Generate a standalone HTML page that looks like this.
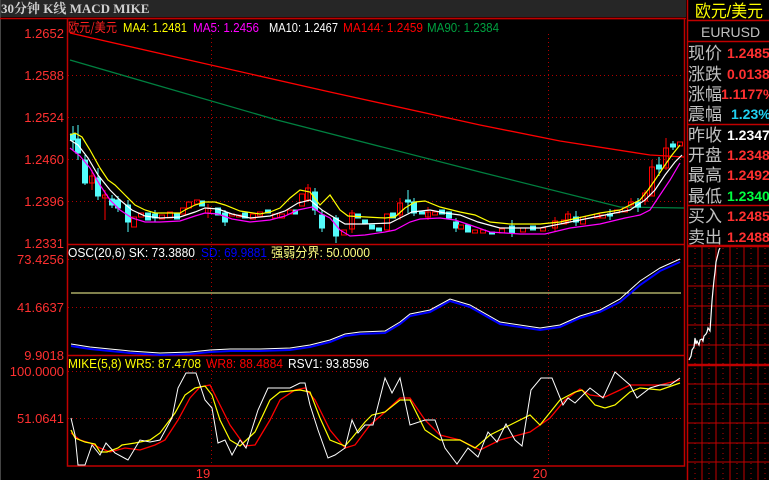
<!DOCTYPE html>
<html><head><meta charset="utf-8"><style>
html,body{margin:0;padding:0;background:#000;width:769px;height:480px;overflow:hidden}
svg{display:block}
text{font-family:"Liberation Sans","Noto Sans CJK SC",sans-serif}
</style></head><body>
<svg width="769" height="480" viewBox="0 0 769 480" xmlns="http://www.w3.org/2000/svg">
<rect width="769" height="480" fill="#000"/>
<rect x="0" y="0" width="686" height="17" fill="#262626"/>
<text x="1" y="13" font-size="13" font-weight="bold" fill="#d0d0d0" style="font-family:'Liberation Serif','Noto Serif CJK SC',serif">30分钟 K线 MACD MIKE</text>
<line x1="0" y1="0" x2="0" y2="480" stroke="#444" stroke-width="2"/>
<g stroke="#c00000" stroke-width="1.5" fill="none">
<line x1="0" y1="18.5" x2="686" y2="18.5"/>
<rect x="67.5" y="18.5" width="617" height="447.5"/>
<line x1="67" y1="244.5" x2="685" y2="244.5"/>
<line x1="67" y1="355.5" x2="685" y2="355.5"/>
</g>
<g stroke="#b00000" stroke-width="1" stroke-dasharray="1,3">
<line x1="68" y1="75.5" x2="684" y2="75.5"/>
<line x1="68" y1="117.5" x2="684" y2="117.5"/>
<line x1="68" y1="159.5" x2="684" y2="159.5"/>
<line x1="68" y1="201.5" x2="684" y2="201.5"/>
<line x1="68" y1="259.5" x2="684" y2="259.5"/>
<line x1="68" y1="307.5" x2="684" y2="307.5"/>
<line x1="68" y1="371.5" x2="684" y2="371.5"/>
<line x1="68" y1="418.5" x2="684" y2="418.5"/>
<line x1="211.5" y1="34" x2="211.5" y2="466"/>
<line x1="548.5" y1="34" x2="548.5" y2="466"/>
</g>
<g fill="#ff3030" font-size="13" text-anchor="end">
<text x="64" y="38">1.2652</text>
<text x="64" y="80">1.2588</text>
<text x="64" y="122">1.2524</text>
<text x="64" y="164">1.2460</text>
<text x="64" y="206">1.2396</text>
<text x="64" y="248">1.2331</text>
<text x="64" y="264">73.4256</text>
<text x="64" y="312">41.6637</text>
<text x="64" y="360">9.9018</text>
<text x="64" y="376">100.0000</text>
<text x="64" y="423">51.0641</text>
<text x="203" y="478" text-anchor="middle">19</text>
<text x="540" y="478" text-anchor="middle">20</text>
</g>
<g font-size="13">
<text x="68" y="32" fill="#ff2020" style="font-family:'Noto Sans CJK SC',sans-serif" textLength="49" lengthAdjust="spacingAndGlyphs">欧元/美元</text>
<text x="123" y="32" fill="#ffff00" textLength="64" lengthAdjust="spacingAndGlyphs">MA4: 1.2481</text>
<text x="193" y="32" fill="#ff00ff" textLength="66" lengthAdjust="spacingAndGlyphs">MA5: 1.2456</text>
<text x="269" y="32" fill="#ffffff" textLength="69" lengthAdjust="spacingAndGlyphs">MA10: 1.2467</text>
<text x="343" y="32" fill="#ff0000" textLength="80" lengthAdjust="spacingAndGlyphs">MA144: 1.2459</text>
<text x="427" y="32" fill="#00a040" textLength="72" lengthAdjust="spacingAndGlyphs">MA90: 1.2384</text>
<text x="68" y="257" fill="#ffffff" textLength="127" lengthAdjust="spacingAndGlyphs">OSC(20,6) SK: 73.3880</text>
<text x="201" y="257" fill="#0000ff" textLength="66" lengthAdjust="spacingAndGlyphs">SD: 69.9881</text>
<text x="271" y="257" fill="#ffff80" textLength="99" lengthAdjust="spacingAndGlyphs">强弱分界: 50.0000</text>
<text x="68" y="368" fill="#ffff00" textLength="133" lengthAdjust="spacingAndGlyphs">MIKE(5,8) WR5: 87.4708</text>
<text x="206" y="368" fill="#ff0000" textLength="77" lengthAdjust="spacingAndGlyphs">WR8: 88.4884</text>
<text x="288" y="368" fill="#ffffff" textLength="81" lengthAdjust="spacingAndGlyphs">RSV1: 93.8596</text>
</g>
<polyline fill="none" stroke="#ff0000" stroke-width="1.3" points="70,33 180,58 330,92 480,125 560,141 650,155 684,157"/>
<polyline fill="none" stroke="#008040" stroke-width="1.3" points="70,60 277,120 480,172 620,207 684,208"/>
<g stroke-width="1">
<g fill="#54fcfc" stroke="#54fcfc">
<line x1="73" y1="126" x2="73" y2="150"/><rect x="70.5" y="134" width="5" height="6"/>
<line x1="78" y1="125" x2="78" y2="160"/><rect x="75.5" y="139" width="5" height="14"/>
<line x1="85" y1="155" x2="85" y2="185"/><rect x="82.5" y="160" width="5" height="23"/>
<line x1="98" y1="168" x2="98" y2="200"/><rect x="95.5" y="178" width="5" height="18"/>
<line x1="112" y1="195" x2="112" y2="208"/><rect x="109.5" y="199" width="5" height="6"/>
<line x1="118" y1="196" x2="118" y2="212"/><rect x="115.5" y="200" width="5" height="8"/>
<line x1="128" y1="200" x2="128" y2="232"/><rect x="125.5" y="205" width="5" height="17"/>
<rect x="145.5" y="213" width="5" height="7"/>
<line x1="155" y1="210" x2="155" y2="222"/><rect x="152.5" y="214" width="5" height="4"/>
<rect x="174.5" y="214" width="5" height="5"/>
<rect x="199.5" y="201" width="5" height="5"/>
<rect x="215.5" y="208" width="5" height="7"/>
<line x1="225" y1="210" x2="225" y2="226"/><rect x="222.5" y="213" width="5" height="9"/>
<rect x="242.5" y="213" width="5" height="5"/>
<rect x="265.5" y="210" width="5" height="3"/>
<rect x="292.5" y="210" width="5" height="4"/>
<line x1="315" y1="188" x2="315" y2="215"/><rect x="312.5" y="192" width="5" height="18"/>
<line x1="322" y1="210" x2="322" y2="232"/><rect x="319.5" y="215" width="5" height="13"/>
<line x1="336" y1="215" x2="336" y2="243"/><rect x="333.5" y="218" width="5" height="18"/>
<rect x="355.5" y="214" width="5" height="4"/>
<rect x="362.5" y="220" width="5" height="4"/>
<rect x="369.5" y="225" width="5" height="4"/>
<rect x="376.5" y="228" width="5" height="3"/>
<rect x="390.5" y="213" width="5" height="5"/>
<line x1="408" y1="190" x2="408" y2="213"/><rect x="405.5" y="200" width="5" height="2"/>
<line x1="414" y1="198" x2="414" y2="216"/><rect x="411.5" y="202" width="5" height="11"/>
<rect x="419.5" y="212" width="5" height="2"/>
<rect x="439.5" y="210" width="5" height="4"/>
<rect x="446.5" y="212" width="5" height="6"/>
<line x1="456" y1="218" x2="456" y2="232"/><rect x="453.5" y="222" width="5" height="6"/>
<rect x="465.5" y="225" width="5" height="7"/>
<rect x="489.5" y="232" width="5" height="2"/>
<line x1="512" y1="220" x2="512" y2="237"/><rect x="509.5" y="226" width="5" height="7"/>
<rect x="530.5" y="226" width="5" height="4"/>
<line x1="576" y1="211" x2="576" y2="226"/><rect x="573.5" y="217" width="5" height="5"/>
<line x1="610" y1="209" x2="610" y2="220"/><rect x="607.5" y="214" width="5" height="2"/>
<line x1="638" y1="198" x2="638" y2="212"/><rect x="635.5" y="202" width="5" height="5"/>
<line x1="659" y1="157" x2="659" y2="176"/><rect x="656.5" y="165" width="5" height="4"/>
<line x1="673" y1="141" x2="673" y2="150"/><rect x="670.5" y="144" width="5" height="3"/>
</g>
<g fill="none" stroke="#ff0000">
<line x1="92" y1="170" x2="92" y2="190"/><rect x="89.5" y="176" width="5" height="7"/>
<line x1="105" y1="190" x2="105" y2="220"/><rect x="102.5" y="195" width="5" height="3"/>
<rect x="131.5" y="217" width="5" height="10"/>
<rect x="138.5" y="213" width="5" height="4"/>
<rect x="159.5" y="215" width="5" height="4"/>
<rect x="167.5" y="212" width="5" height="6"/>
<rect x="180.5" y="208" width="5" height="6"/>
<rect x="186.5" y="202" width="5" height="6"/>
<rect x="194.5" y="200" width="5" height="4"/>
<line x1="208" y1="204" x2="208" y2="218"/><rect x="205.5" y="208" width="5" height="5"/>
<rect x="229.5" y="214" width="5" height="2"/>
<rect x="236.5" y="215" width="5" height="2"/>
<rect x="250.5" y="214" width="5" height="5"/>
<rect x="257.5" y="212" width="5" height="4"/>
<rect x="272.5" y="214" width="5" height="4"/>
<rect x="279.5" y="214" width="5" height="4"/>
<rect x="287.5" y="210" width="5" height="4"/>
<rect x="299.5" y="194" width="5" height="12"/>
<line x1="308" y1="184" x2="308" y2="202"/><rect x="305.5" y="188" width="5" height="12"/>
<rect x="341.5" y="230" width="5" height="5"/>
<line x1="352" y1="210" x2="352" y2="233"/><rect x="349.5" y="213" width="5" height="16"/>
<rect x="384.5" y="214" width="5" height="16"/>
<line x1="400" y1="198" x2="400" y2="220"/><rect x="397.5" y="203" width="5" height="12"/>
<line x1="428" y1="207" x2="428" y2="220"/><rect x="425.5" y="212" width="5" height="5"/>
<rect x="432.5" y="212" width="5" height="3"/>
<rect x="458.5" y="225" width="5" height="4"/>
<rect x="472.5" y="230" width="5" height="3"/>
<rect x="480.5" y="230" width="5" height="3"/>
<rect x="499.5" y="229" width="5" height="4"/>
<rect x="520.5" y="228" width="5" height="4"/>
<rect x="540.5" y="228" width="5" height="3"/>
<line x1="555" y1="217" x2="555" y2="232"/><rect x="552.5" y="221" width="5" height="7"/>
<rect x="561.5" y="220" width="5" height="4"/>
<line x1="568" y1="211" x2="568" y2="224"/><rect x="565.5" y="214" width="5" height="8"/>
<rect x="580.5" y="217" width="5" height="7"/>
<rect x="594.5" y="214" width="5" height="4"/>
<rect x="600.5" y="215" width="5" height="3"/>
<rect x="614.5" y="210" width="5" height="3"/>
<rect x="622.5" y="208" width="5" height="4"/>
<line x1="631" y1="198" x2="631" y2="208"/><rect x="628.5" y="202" width="5" height="3"/>
<line x1="645" y1="190" x2="645" y2="205"/><rect x="642.5" y="193" width="5" height="8"/>
<line x1="652" y1="160" x2="652" y2="196"/><rect x="649.5" y="167" width="5" height="29"/>
<line x1="666" y1="138" x2="666" y2="170"/><rect x="663.5" y="148" width="5" height="20"/>
<rect x="677.5" y="142" width="5" height="4"/>
</g>
</g>
<polyline fill="none" stroke="#ffff00" stroke-width="1.2" points="70,135 75,133 82,137 90,150 100,168 108,180 115,185 125,195 135,205 145,210 155,213 180,213 185,210 195,205 205,202 215,202 225,205 240,211 260,214 270,212 280,208 290,198 300,190 310,192 320,205 330,195 340,210 348,216 385,218 395,217 405,208 415,202 425,201 440,207 460,212 475,215 490,222 510,224 540,224 560,222 600,213 620,210 640,200 648,190 655,180 665,165 672,155 680,145"/>
<polyline fill="none" stroke="#ffffff" stroke-width="1.2" points="70,140 78,145 88,158 98,175 110,190 120,200 132,210 145,216 160,218 180,217 195,212 205,208 218,209 232,214 250,218 270,216 285,211 298,203 310,200 322,210 330,215 345,224 365,224 390,223 400,218 412,212 430,210 445,213 460,215 478,222 500,228 540,228 570,222 600,216 630,210 645,200 655,190 665,175 675,162 682,155"/>
<polyline fill="none" stroke="#ff00ff" stroke-width="1.2" points="70,148 80,156 90,168 100,185 110,200 120,210 132,218 145,222 160,222 180,221 195,216 205,213 218,214 232,219 250,222 270,220 285,216 298,210 312,207 322,214 330,218 340,230 350,236 365,235 385,232 395,230 410,222 420,219 440,218 455,220 470,225 490,232 520,234 545,234 570,228 600,224 625,218 640,215 650,210 660,195 670,180 680,163"/>
<line x1="71" y1="293" x2="681" y2="293" stroke="#ffff99" stroke-width="1"/>
<polyline fill="none" stroke="#0000ff" stroke-width="2" points="71,346 90,349 110,351 130,353 160,355 190,354 210,352 230,351 260,351 290,350 310,347 330,342 345,336 360,334 385,333 400,324 410,316 430,312 450,301 470,307 500,324 540,330 560,327 580,318 600,312 620,302 640,285 660,271 680,262"/>
<polyline fill="none" stroke="#ffffff" stroke-width="1" points="71,344 90,347 110,349 130,351 160,353 190,352 210,350 230,349 260,349 290,348 310,345 330,340 345,334 360,332 385,331 400,322 410,314 430,310 450,299 470,305 500,322 540,328 560,325 580,316 600,310 620,299 640,281 660,268 680,259"/>
<polyline fill="none" stroke="#ff0000" stroke-width="1.3" points="71,433 80,440 90,443 100,448 110,452 125,448 140,450 155,445 165,440 178,420 190,398 200,387 210,385 220,405 230,425 245,446 255,445 270,420 280,400 295,390 305,388 315,400 330,430 345,448 355,445 370,425 385,412 400,398 410,398 425,420 440,435 460,440 480,450 500,440 515,436 530,432 550,418 565,400 580,389 590,395 605,397 620,390 630,385 660,385 680,380"/>
<polyline fill="none" stroke="#ffff00" stroke-width="1.2" points="71,430 75,438 85,442 95,444 100,452 107,452 118,448 122,445 135,443 150,440 160,433 175,413 185,395 195,388 205,386 212,395 220,420 230,440 240,446 255,432 270,400 280,392 300,390 310,392 320,418 330,440 345,446 352,438 365,422 372,415 385,412 400,400 410,400 425,430 440,440 460,440 475,448 490,435 510,425 530,415 540,425 560,400 575,392 582,390 595,405 605,408 615,405 630,392 640,388 660,390 680,383"/>
<polyline fill="none" stroke="#ffffff" stroke-width="1" points="71,418 75,435 78,465 85,465 92,445 100,455 106,443 115,453 128,460 140,440 150,442 160,440 172,418 178,388 186,373 196,373 205,400 212,408 218,443 225,440 232,455 240,440 246,448 258,410 268,388 275,388 290,388 300,383 305,383 310,405 318,430 328,458 335,455 345,448 352,420 358,433 365,425 373,425 385,378 392,393 400,378 410,425 425,420 435,420 445,448 457,464 468,448 478,457 488,432 497,442 506,424 515,440 522,446 531,390 541,378 552,378 563,405 568,398 575,403 590,388 603,398 615,372 630,385 637,398 650,388 660,385 670,385 680,378"/>
<line x1="687.5" y1="0" x2="687.5" y2="480" stroke="#c00000" stroke-width="1.5"/>
<g stroke="#c00000" stroke-width="1.5">
<line x1="687" y1="20.5" x2="769" y2="20.5"/>
<line x1="687" y1="41.5" x2="769" y2="41.5"/>
<line x1="687" y1="124.5" x2="769" y2="124.5"/>
<line x1="687" y1="205.5" x2="769" y2="205.5"/>
<line x1="687" y1="246" x2="769" y2="246" stroke-width="2.5"/>
<line x1="687" y1="365" x2="769" y2="365" stroke-width="2.5"/>
</g>
<g font-size="17" fill="#c0c0c0" style="font-family:'Noto Sans CJK SC',sans-serif">
<text x="695" y="17" fill="#ffff00" textLength="68" lengthAdjust="spacingAndGlyphs">欧元/美元</text>
<text x="688" y="59">现价</text><text x="688" y="80">涨跌</text><text x="688" y="100">涨幅</text><text x="688" y="120">震幅</text>
<text x="688" y="141">昨收</text><text x="688" y="161">开盘</text><text x="688" y="181">最高</text><text x="688" y="202">最低</text>
<text x="688" y="222">买入</text><text x="688" y="243">卖出</text>
</g>
<text x="701" y="37" font-size="14" fill="#c0c0c0">EURUSD</text>
<g font-size="14" font-weight="bold" fill="#ff3030">
<text x="727" y="58">1.2485</text><text x="727" y="79">0.0138</text><text x="721" y="99">1.1177%</text>
<text x="731" y="119" fill="#20d0f0">1.23%</text>
<text x="727" y="140" fill="#ffffff">1.2347</text><text x="727" y="160">1.2348</text><text x="727" y="180">1.2492</text>
<text x="727" y="201" fill="#00ff40">1.2340</text><text x="727" y="221">1.2485</text><text x="727" y="242">1.2488</text>
</g>
<g stroke="#c00000" stroke-width="1">
<line x1="688" y1="266" x2="769" y2="266"/><line x1="688" y1="286" x2="769" y2="286"/><line x1="688" y1="306" x2="769" y2="306"/><line x1="688" y1="325" x2="769" y2="325"/><line x1="688" y1="345" x2="769" y2="345"/>
<line x1="688" y1="384" x2="769" y2="384"/><line x1="688" y1="404" x2="769" y2="404"/><line x1="688" y1="423" x2="769" y2="423"/><line x1="688" y1="443" x2="769" y2="443"/><line x1="688" y1="462" x2="769" y2="462"/>
<line x1="702" y1="247" x2="702" y2="480"/><line x1="716" y1="247" x2="716" y2="480"/><line x1="730" y1="247" x2="730" y2="480"/><line x1="744" y1="247" x2="744" y2="480"/><line x1="758" y1="247" x2="758" y2="480"/>
</g>
<g stroke="#c00000" stroke-width="1" stroke-dasharray="1,4">
<line x1="695" y1="248" x2="695" y2="480"/><line x1="709" y1="248" x2="709" y2="480"/><line x1="723" y1="248" x2="723" y2="480"/><line x1="737" y1="248" x2="737" y2="480"/><line x1="751" y1="248" x2="751" y2="480"/><line x1="765" y1="248" x2="765" y2="480"/>
</g>
<polyline fill="none" stroke="#ffffff" stroke-width="1.2" points="689,360 691,356 692,350 694,347 695,338 696,344 697,341 699,345 700,340 702,339 703,341 704,336 706,334 707,332 708,328 710,331 711,316 712,301 713,290 714,280 715,272 716,262 717,258 718,254 719,250 720,248"/>
</svg>
</body></html>
